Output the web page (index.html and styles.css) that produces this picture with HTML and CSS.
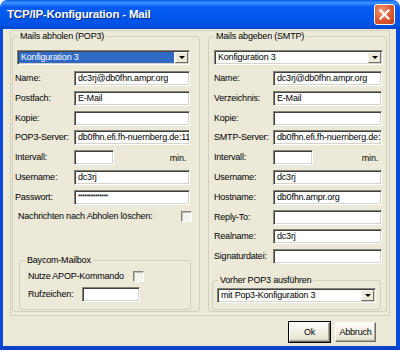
FILE: index.html
```html
<!DOCTYPE html>
<html>
<head>
	<title>TCP/IP-Konfiguration - Mail</title>
	<meta charset="utf-8"/>
	<link rel="stylesheet" href="styles.css">
</head>
<body>

<div class="window">
	<div class="titlebar">
		<span class="title">TCP/IP-Konfiguration - Mail</span>
		<span class="close">
			<svg width="13" height="13" viewBox="0 0 13 13"><path d="M2.5 2.5 L10.5 10.5 M10.5 2.5 L2.5 10.5" stroke="#fff" stroke-width="2.2" stroke-linecap="square"/></svg>
		</span>
	</div>
	<div class="client">
		<div class="panel">
			<fieldset class="group pop3">
				<legend>Mails abholen (POP3)</legend>
				<div class="combo main-combo">
					<span class="combo-text selected">Konfiguration 3</span>
					<span class="drop"></span>
				</div>
				<div class="form">
					<label>Name:</label><div class="edit">dc3rj@db0fhn.ampr.org</div>
					<label>Postfach:</label><div class="edit">E-Mail</div>
					<label>Kopie:</label><div class="edit"></div>
					<label>POP3-Server:</label><div class="edit">db0fhn.efi.fh-nuernberg.de:11</div>
					<label>Intervall:</label><div class="interval"><div class="edit short"></div><span>min.</span></div>
					<label>Username:</label><div class="edit">dc3rj</div>
					<label>Passwort:</label><div class="edit pass">**************</div>
				</div>
				<div class="check-row delete-row">
					<span>Nachrichten nach Abholen löschen:</span>
					<span class="check"></span>
				</div>
				<fieldset class="group baycom">
					<legend>Baycom-Mailbox</legend>
					<div class="check-row apop-row">
						<span>Nutze APOP-Kommando</span>
						<span class="check"></span>
					</div>
					<div class="call-row">
						<label>Rufzeichen:</label><div class="edit"></div>
					</div>
				</fieldset>
			</fieldset>

			<fieldset class="group smtp">
				<legend>Mails abgeben (SMTP)</legend>
				<div class="combo main-combo">
					<span class="combo-text">Konfiguration 3</span>
					<span class="drop"></span>
				</div>
				<div class="form">
					<label>Name:</label><div class="edit">dc3rj@db0fhn.ampr.org</div>
					<label>Verzeichnis:</label><div class="edit">E-Mail</div>
					<label>Kopie:</label><div class="edit"></div>
					<label>SMTP-Server:</label><div class="edit">db0fhn.efi.fh-nuernberg.de:</div>
					<label>Intervall:</label><div class="interval"><div class="edit short"></div><span>min.</span></div>
					<label>Username:</label><div class="edit">dc3rj</div>
					<label>Hostname:</label><div class="edit">db0fhn.ampr.org</div>
					<label>Reply-To:</label><div class="edit"></div>
					<label>Realname:</label><div class="edit">dc3rj</div>
					<label>Signaturdatei:</label><div class="edit"></div>
				</div>
				<fieldset class="group before">
					<legend>Vorher POP3 ausführen</legend>
					<div class="combo">
						<span class="combo-text">mit Pop3-Konfiguration 3</span>
						<span class="drop"></span>
					</div>
				</fieldset>
			</fieldset>
		</div>
		<div class="buttons">
			<span class="btn default">Ok</span>
			<span class="btn">Abbruch</span>
		</div>
	</div>
</div>

</body>
</html>
```

FILE: styles.css
```css
* {
	box-sizing: border-box;
}

body {
	margin: 0;
	background: #ffffff;
	font-family: "Liberation Sans", Arial, sans-serif;
	font-size: 9px;
	letter-spacing: -0.2px;
	color: #000000;
}

.window {
	width: 400px;
	height: 350px;
	display: flex;
	flex-direction: column;
}

/* title bar */

.titlebar {
	height: 29px;
	display: flex;
	align-items: center;
	justify-content: space-between;
	padding: 0 5px 0 7px;
	border-radius: 7px 7px 0 0;
	background: linear-gradient(#0a5ce8 0%, #3d94ff 10%, #0a5df0 22%, #0057ec 55%, #0052e4 85%, #0046d2 100%);
}

.title {
	color: white;
	font-weight: bold;
	font-size: 11.5px;
	letter-spacing: -0.2px;
	text-shadow: 1px 1px 0 #0a2a8a;
	margin-top: -2px;
}

.close {
	width: 21px;
	height: 21px;
	display: flex;
	align-items: center;
	justify-content: center;
	border: 1px solid #ffffff;
	border-radius: 3px;
	background: radial-gradient(circle at 35% 30%, #f0a080 0%, #e0603a 45%, #c23b14 100%);
	margin-top: -1px;
}

/* client area */

.client {
	flex: 1;
	background: #ece9d8;
	border-left: 3px solid #0a4ad6;
	border-right: 4px solid #0a4ad6;
	border-bottom: 4px solid #0a43c8;
	padding: 1px 6px 0 7px;
}

.panel {
	height: 286px;
	border: 1px solid #d0d0bf;
	display: flex;
	padding: 0 2px 0 1px;
}

.group {
	margin: 0;
	padding: 0;
	min-width: 0;
	border: 1px solid #d0d0bf;
	border-radius: 3px;
}

.group legend {
	padding: 0 2px;
	margin-left: 5px;
	line-height: 11px;
}

.pop3 {
	width: 188px;
	height: 281px;
}

.smtp {
	width: 179px;
	height: 281px;
	margin-left: 8px;
}

/* controls */

.edit {
	height: 15px;
	background: #ffffff;
	border-top: 1px solid #868478;
	border-left: 1px solid #868478;
	border-right: 1px solid #ffffff;
	border-bottom: 1px solid #ffffff;
	box-shadow: inset 1px 1px 0 #424142, inset -1px -1px 0 #d6d3ce;
	padding: 0 2px 0 3px;
	line-height: 12px;
	white-space: nowrap;
	overflow: hidden;
}

.pass {
	font-size: 7px;
	letter-spacing: -0.6px;
	line-height: 11px;
}

.combo {
	height: 15px;
	display: flex;
	background: #ffffff;
	border-top: 1px solid #868478;
	border-left: 1px solid #868478;
	border-right: 1px solid #ffffff;
	border-bottom: 1px solid #ffffff;
	box-shadow: inset 1px 1px 0 #424142, inset -1px -1px 0 #d6d3ce;
	padding: 1px;
}

.combo-text {
	flex: 1;
	padding-left: 2px;
	line-height: 11px;
	white-space: nowrap;
}

.combo-text.selected {
	background: #316ac5;
	color: #ffffff;
	margin-right: 1px;
}

.drop {
	width: 13px;
	display: flex;
	align-items: center;
	justify-content: center;
	background: #ece9d8;
	border-top: 1px solid #f4f3ee;
	border-left: 1px solid #f4f3ee;
	border-right: 1px solid #716f64;
	border-bottom: 1px solid #716f64;
}

.drop::after {
	content: "";
	border-left: 3px solid transparent;
	border-right: 3px solid transparent;
	border-top: 3px solid #000000;
}

.check {
	width: 11px;
	height: 11px;
	background: #f4f3ee;
	border-top: 1px solid #868478;
	border-left: 1px solid #868478;
	border-right: 1px solid #ffffff;
	border-bottom: 1px solid #ffffff;
	box-shadow: inset 1px 1px 0 #c0beb2;
}

/* POP3 column */

.main-combo {
	margin-top: 8px;
}

.pop3 .main-combo {
	width: 173px;
	margin-left: 4px;
}

.form {
	display: grid;
	grid-auto-rows: 15px;
	row-gap: 4.8px;
	margin-top: 6px;
	align-items: center;
}

.form label {
	line-height: 15px;
	white-space: nowrap;
}

.pop3 .form {
	grid-template-columns: 59px 116px;
	margin-left: 2px;
}

.interval {
	display: flex;
	align-items: center;
	justify-content: space-between;
	padding-right: 4px;
}

.interval .short {
	width: 40px;
}

.check-row {
	display: flex;
	align-items: center;
	justify-content: space-between;
}

.delete-row {
	width: 174px;
	margin: 6px 0 0 5px;
}

.baycom {
	width: 172px;
	height: 55px;
	margin: 33px 0 0 6px;
}

.apop-row {
	width: 116px;
	margin: 5px 0 0 8px;
}

.call-row {
	display: grid;
	grid-template-columns: 54px 58px;
	align-items: center;
	margin: 5px 0 0 8px;
}

/* SMTP column */

.smtp .main-combo {
	width: 169px;
	margin-left: 5px;
}

.smtp .form {
	grid-template-columns: 59px 109px;
	margin-left: 5px;
}

.before {
	width: 169px;
	height: 35px;
	margin: 11px 0 0 3px;
}

.before .combo {
	width: 159px;
	margin: 2px 0 0 4px;
}

/* buttons */

.buttons {
	display: flex;
	justify-content: flex-end;
	gap: 5px;
	margin-top: 6px;
	padding-right: 14px;
}

.btn {
	width: 41px;
	height: 20px;
	display: flex;
	align-items: center;
	justify-content: center;
	background: linear-gradient(#fbfbf8, #ece9d8 80%, #d8d4c4);
	border: 1px solid #ffffff;
	border-right-color: #716f64;
	border-bottom-color: #716f64;
	box-shadow: inset -1px -1px 0 #aca899;
}

.btn.default {
	outline: 1px solid #000000;
}
```
